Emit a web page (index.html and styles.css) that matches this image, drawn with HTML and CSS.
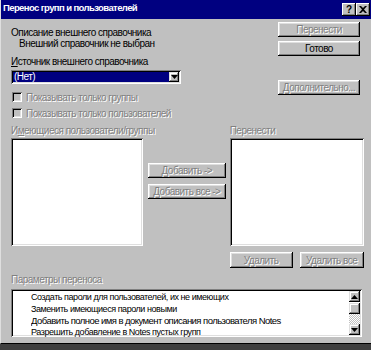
FILE: index.html
```html
<!DOCTYPE html>
<html>
<head>
<meta charset="utf-8">
<link rel="stylesheet" href="styles.css">
</head>
<body>
<div class="win">
  <div class="title">
    <span class="title-text">Перенос групп и пользователей</span>
    <span class="tbtns"><span class="tbtn">?</span><span class="tbtn">
      <svg width="8" height="7" viewBox="0 0 8 7"><path d="M0 0h2l2 2 2-2h2L5 3.5 8 7H6L4 5 2 7H0l3-3.5z" fill="#000"/></svg>
    </span></span>
  </div>
  <div class="body">
    <div class="top">
      <div class="top-left">
        <div class="line">Описание внешнего справочника</div>
        <div class="line indent">Внешний справочник не выбран</div>
        <div class="line lbl-src"><u>И</u>сточник внешнего справочника</div>
        <div class="combo">
          <div class="combo-val">(Нет)</div>
          <div class="combo-btn"><svg width="7" height="4" viewBox="0 0 7 4"><path d="M0 0h7L3.5 4z" fill="#000"/></svg></div>
        </div>
        <div class="cb-row"><span class="cb"></span><span class="dis">Показывать только группы</span></div>
        <div class="cb-row"><span class="cb"></span><span class="dis">Показывать только пользователей</span></div>
      </div>
      <div class="top-right">
        <div class="btn dis">Перенести</div>
        <div class="btn ok">Готово</div>
        <div class="btn dis more">Дополнительно...</div>
      </div>
    </div>
    <div class="mid">
      <div class="col-left">
        <div class="lbl dis">И<u>м</u>еющиеся пользователи/группы</div>
        <div class="list"></div>
      </div>
      <div class="col-mid">
        <div class="btn dis"><u>Д</u>обавить -&gt;</div>
        <div class="btn dis add-all">Добавить все -&gt;</div>
      </div>
      <div class="col-right">
        <div class="lbl dis">Перенести</div>
        <div class="list"></div>
        <div class="rm-row">
          <div class="btn dis rm">Удалить</div>
          <div class="btn dis rm-all">Удалить все</div>
        </div>
      </div>
    </div>
    <div class="bottom">
      <div class="lbl dis">Параметры переноса</div>
      <div class="list opts">
        <div class="opt-items">
          <div class="opt">Создать пароли для пользователей, их не имеющих</div>
          <div class="opt">Заменить имеющиеся пароли новыми</div>
          <div class="opt big">Добавить полное имя в документ описания пользователя Notes</div>
          <div class="opt">Разрешить добавление в Notes пустых групп</div>
        </div>
        <div class="sb">
          <div class="sb-btn"><svg width="7" height="4" viewBox="0 0 7 4"><path d="M3.5 0L7 4H0z" fill="#000"/></svg></div>
          <div class="sb-thumb"></div>
          <div class="sb-track"></div>
          <div class="sb-btn"><svg width="7" height="4" viewBox="0 0 7 4"><path d="M0 0h7L3.5 4z" fill="#000"/></svg></div>
        </div>
      </div>
    </div>
  </div>
</div>
</body>
</html>
```
FILE: styles.css
```css
* { box-sizing: border-box; }
html, body { margin: 0; padding: 0; }
body {
  width: 371px;
  height: 350px;
  background: #404040;
  font-family: "Liberation Sans", Arial, sans-serif;
  font-size: 10px;
  letter-spacing: -0.5px;
  color: #000;
  overflow: hidden;
}
.win {
  width: 371px;
  height: 344px;
  background: #c0c0c0;
  border-left: 1px solid #dfdfdf;
  border-bottom: 1px solid #000;
  display: flex;
  flex-direction: column;
}
.title {
  height: 19px;
  background: #000080;
  display: flex;
  align-items: flex-start;
  justify-content: space-between;
  padding: 1px 1px 0 2px;
}
.title-text {
  color: #fff;
  font-weight: bold;
  font-size: 9.5px;
  line-height: 14px;
  letter-spacing: -0.6px;
}
.tbtns { display: flex; margin-top: 2px; }
.tbtn {
  width: 14px;
  height: 13px;
  background: #c0c0c0;
  box-shadow: inset -1px -1px #000, inset 1px 1px #fff, inset -2px -2px #808080;
  display: flex;
  align-items: center;
  justify-content: center;
  font-weight: bold;
  font-size: 10px;
  line-height: 10px;
  letter-spacing: 0;
}
.body {
  padding: 0 7px 0 10px;
  flex: 1;
}
.top {
  height: 106px;
  padding-top: 3px;
  display: flex;
}
.top-left {
  width: 170px;
  margin-top: 5px;
}
.line { line-height: 11px; height: 11px; white-space: nowrap; }
.indent { padding-left: 8px; }
.lbl-src { margin-top: 7px; }
.combo {
  margin-top: 3px;
  height: 14px;
  display: flex;
  padding: 2px;
  background: #fff;
  box-shadow: inset 1px 1px #808080, inset -1px -1px #fff, inset 2px 2px #000, inset -2px -2px #dfdfdf;
}
.combo-val {
  flex: 1;
  background: #000080;
  color: #fff;
  line-height: 10px;
  padding-left: 1px;
}
.combo-btn {
  width: 10px;
  background: #c0c0c0;
  box-shadow: inset -1px -1px #000, inset 1px 1px #dfdfdf, inset -2px -2px #808080, inset 2px 2px #fff;
  display: flex;
  align-items: center;
  justify-content: center;
}
.cb-row {
  height: 16px;
  display: flex;
  align-items: center;
  gap: 4px;
  padding-left: 1px;
  white-space: nowrap;
}
.combo + .cb-row { margin-top: 5px; }
.cb {
  width: 10px;
  height: 10px;
  background: #c0c0c0;
  box-shadow: inset 1px 1px #808080, inset -1px -1px #fff, inset 2px 2px #000, inset -2px -2px #dfdfdf;
}
.dis {
  color: #808080;
  text-shadow: 1px 1px 0 #fff;
}
.top-right {
  margin-left: auto;
  margin-right: 4px;
  width: 82px;
  display: flex;
  flex-direction: column;
  gap: 4px;
}
.btn {
  height: 15px;
  background: #c0c0c0;
  box-shadow: inset -1px -1px #000, inset 1px 1px #fff, inset -2px -2px #808080, inset 2px 2px #dfdfdf;
  display: flex;
  align-items: center;
  justify-content: center;
  line-height: 11px;
  white-space: nowrap;
}
.btn.more { margin-top: 20px; }
.mid {
  height: 143px;
  display: flex;
}
.lbl { line-height: 11px; height: 11px; white-space: nowrap; }
.col-left { width: 132px; }
.list {
  margin-top: 2px;
  height: 108px;
  background: #fff;
  box-shadow: inset 1px 1px #808080, inset -1px -1px #fff, inset 2px 2px #000, inset -2px -2px #dfdfdf;
}
.col-mid {
  width: 78px;
  margin-left: 5px;
  padding-top: 38px;
  display: flex;
  flex-direction: column;
  gap: 6px;
}
.col-right {
  width: 135px;
  margin-left: 4px;
}
.rm-row {
  margin-top: 6px;
  display: flex;
  gap: 7px;
}
.rm-row .btn { height: 16px; }
.rm { width: 63px; }
.rm-all { width: 64px; }
.bottom { margin-top: 6px; }
.list.opts {
  margin-top: 4px;
  height: 48px;
  width: 351px;
  display: flex;
  padding: 2px;
}
.opt-items {
  flex: 1;
  padding-left: 18px;
  padding-top: 1px;
}
.opt {
  height: 11.5px;
  line-height: 11.5px;
  font-size: 9px;
  letter-spacing: -0.45px;
  white-space: nowrap;
  overflow: hidden;
}
.opt.big { font-size: 9.5px; letter-spacing: -0.55px; }
.sb {
  width: 11px;
  display: flex;
  flex-direction: column;
}
.sb-btn, .sb-thumb {
  height: 11px;
  background: #c0c0c0;
  box-shadow: inset -1px -1px #000, inset 1px 1px #dfdfdf, inset -2px -2px #808080, inset 2px 2px #fff;
  display: flex;
  align-items: center;
  justify-content: center;
}
.sb-thumb { margin-top: 1px; }
.sb-track {
  flex: 1;
  background: repeating-conic-gradient(#fff 0 25%, #c0c0c0 0 50%) 0 0 / 2px 2px;
}
```
